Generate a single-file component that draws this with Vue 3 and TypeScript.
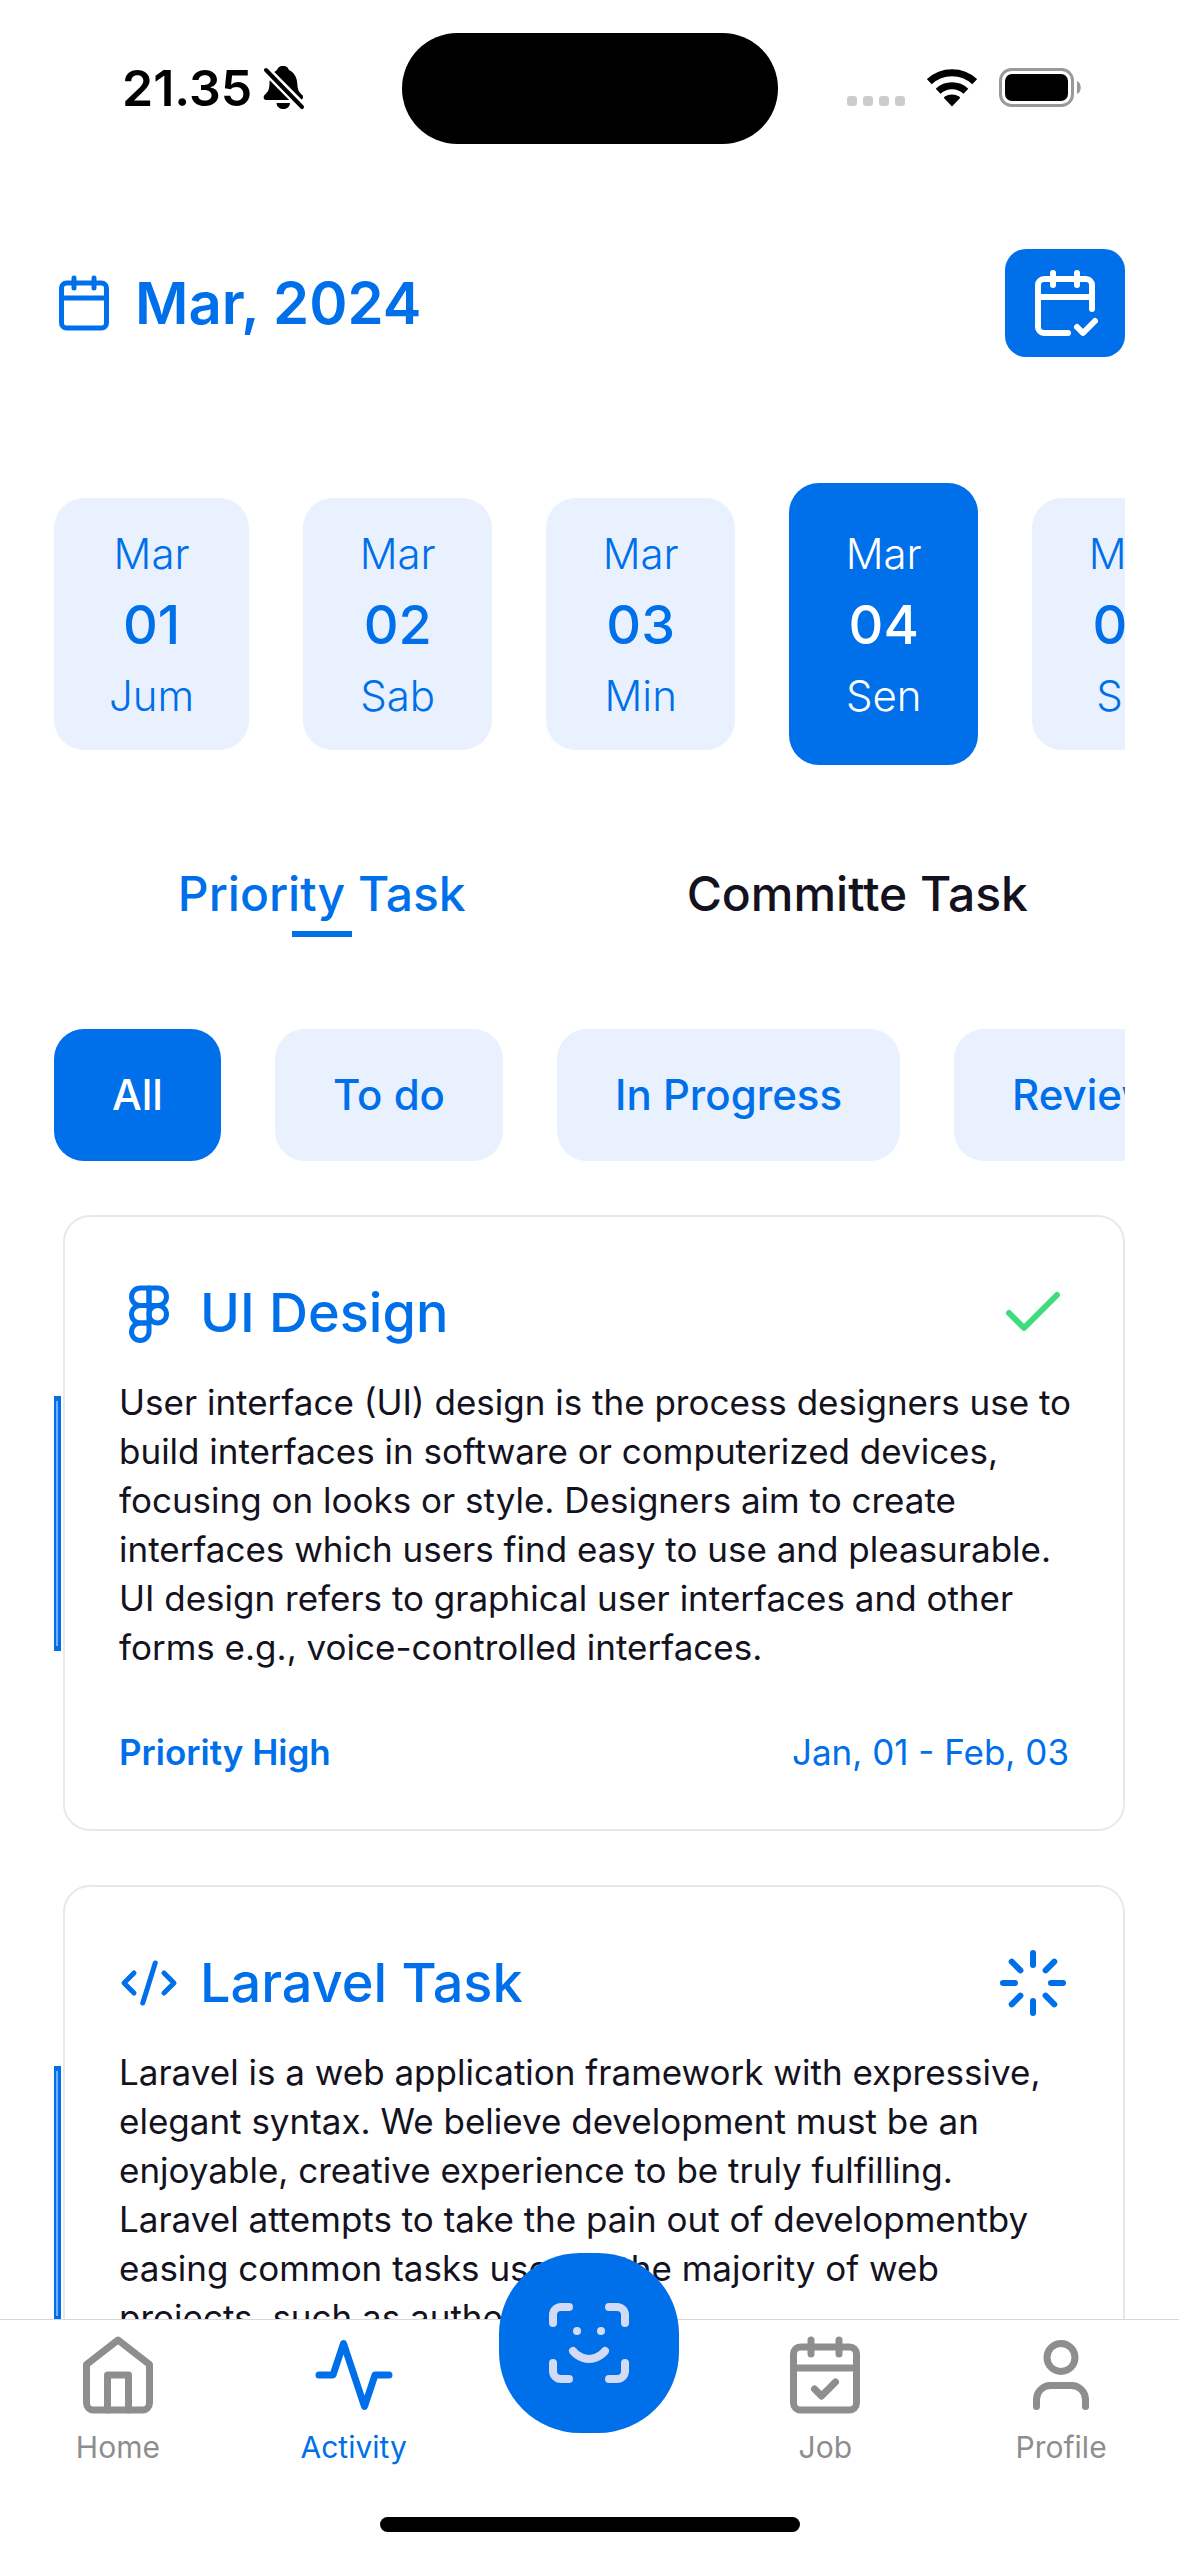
<script setup lang="ts">
import { ref } from 'vue'

const icons: Record<string, string[]> = {
  calendar: [
    'M8 2v4',
    'M16 2v4',
    'M5 4h14a2 2 0 0 1 2 2v14a2 2 0 0 1-2 2H5a2 2 0 0 1-2-2V6a2 2 0 0 1 2-2z',
    'M3 10h18',
  ],
  calendarDone: [
    'M8 2v4',
    'M16 2v4',
    'M21 14V6a2 2 0 0 0-2-2H5a2 2 0 0 0-2 2v14a2 2 0 0 0 2 2h8',
    'M3 10h18',
    'm16 20 2 2 4-4',
  ],
  figma: [
    'M5 5.5A3.5 3.5 0 0 1 8.5 2H12v7H8.5A3.5 3.5 0 0 1 5 5.5z',
    'M12 2h3.5a3.5 3.5 0 1 1 0 7H12V2z',
    'M12 12.5a3.5 3.5 0 1 1 7 0 3.5 3.5 0 1 1-7 0z',
    'M5 19.5A3.5 3.5 0 0 1 8.5 16H12v3.5a3.5 3.5 0 1 1-7 0z',
    'M5 12.5A3.5 3.5 0 0 1 8.5 9H12v7H8.5A3.5 3.5 0 0 1 5 12.5z',
  ],
  code: ['m18 16 4-4-4-4', 'm6 8-4 4 4 4', 'm14.5 4-5 16'],
  check: ['M20 6 9 17l-5-5'],
  loader: [
    'M12 2v4',
    'm16.2 7.8 2.9-2.9',
    'M18 12h4',
    'm16.2 16.2 2.9 2.9',
    'M12 18v4',
    'm4.9 19.1 2.9-2.9',
    'M2 12h4',
    'm4.9 4.9 2.9 2.9',
  ],
  home: ['m3 9 9-7 9 7v11a2 2 0 0 1-2 2H5a2 2 0 0 1-2-2z', 'M9 22V12h6v10'],
  activity: ['M22 12h-4l-3 9L9 3l-3 9H2'],
  job: [
    'M8 2v4',
    'M16 2v4',
    'M5 4h14a2 2 0 0 1 2 2v14a2 2 0 0 1-2 2H5a2 2 0 0 1-2-2V6a2 2 0 0 1 2-2z',
    'M3 10h18',
    'm9 16 2 2 4-4',
  ],
  user: ['M19 21v-2a4 4 0 0 0-4-4H9a4 4 0 0 0-4 4v2', 'M8 7a4 4 0 1 0 8 0 4 4 0 1 0-8 0z'],
  scan: [
    'M3 7V5a2 2 0 0 1 2-2h2',
    'M17 3h2a2 2 0 0 1 2 2v2',
    'M21 17v2a2 2 0 0 1-2 2h-2',
    'M7 21H5a2 2 0 0 1-2-2v-2',
    'M8 14s1.5 2 4 2 4-2 4-2',
    'M9 9h.01',
    'M15 9h.01',
  ],
}

const days = [
  { date: '01', day: 'Jum' },
  { date: '02', day: 'Sab' },
  { date: '03', day: 'Min' },
  { date: '04', day: 'Sen' },
  { date: '05', day: 'Sel' },
]
const selectedDay = ref('04')

const tabs = ['Priority Task', 'Committe Task']
const selectedTab = ref('Priority Task')

const filters = ['All', 'To do', 'In Progress', 'Review']
const selectedFilter = ref('All')

const tasks = [
  {
    title: 'UI Design',
    icon: 'figma',
    state: 'check',
    lines: [
      'User interface (UI) design is the process designers use to',
      'build interfaces in software or computerized devices,',
      'focusing on looks or style. Designers aim to create',
      'interfaces which users find easy to use and pleasurable.',
      'UI design refers to graphical user interfaces and other',
      'forms e.g., voice-controlled interfaces.',
    ],
    priority: 'Priority High',
    range: 'Jan, 01 - Feb, 03',
  },
  {
    title: 'Laravel Task',
    icon: 'code',
    state: 'loader',
    lines: [
      'Laravel is a web application framework with expressive,',
      'elegant syntax. We believe development must be an',
      'enjoyable, creative experience to be truly fulfilling.',
      'Laravel attempts to take the pain out of developmentby',
      'easing common tasks used in the majority of web',
      'projects, such as authentication.',
    ],
    priority: 'Priority High',
    range: 'Jan, 01 - Feb, 03',
  },
]

const navItems = [
  { label: 'Home', icon: 'home' },
  { label: 'Activity', icon: 'activity' },
  { label: '', icon: 'scan' },
  { label: 'Job', icon: 'job' },
  { label: 'Profile', icon: 'user' },
]
</script>

<template>
  <div class="app">
    <div class="status">
      <div class="status-side">
        <span class="clock">21.35</span>
        <svg class="bell" viewBox="0 0 40 44" aria-hidden="true">
          <path
            d="M19 0c4 0 5 2 6 4 6 3 8 8 8.3 14 .3 6 1.5 8 5 11 1.5 2 .5 5-2 5H2c-2.500 0-3-3-1.500-5 3.500-3 4.700-5 5-11C5.500 12 8 7 13 4c1-2 2-4 6-4z"
          />
          <path d="M12.500 37h13.500c-.5 8-13 8-13.500 0z" />
          <path class="slash-gap" d="M-1 1l41 41.500" />
          <path class="slash" d="M2 4l36 37" />
        </svg>
      </div>
      <div class="island"></div>
      <div class="status-side status-right">
        <span class="dots"><i v-for="n in 4" :key="n"></i></span>
        <svg class="wifi" viewBox="0 0 50 38" aria-hidden="true">
          <path class="arc" d="M2.300 12.700a33.200 33.200 0 0 1 45.400 0" />
          <path class="arc" d="M11.100 22.300a20.400 20.400 0 0 1 27.800 0" />
          <path d="M25 37.500l-7.600-8c-.6-.7-.4-1.500.4-2 4.400-2.800 10-2.800 14.400 0 .8.5 1 1.300.4 2z" />
        </svg>
        <svg class="battery" viewBox="0 0 83 40" aria-hidden="true">
          <rect class="shell" x="1.500" y="1.500" width="72" height="36" rx="11" />
          <rect x="6" y="6" width="63" height="27" rx="7" />
          <path class="tip" d="M78 13c5 2 5 11 0 13z" />
        </svg>
      </div>
    </div>

    <main class="content">
      <header class="top">
        <h1 class="month">
          <svg class="icon icon-60" viewBox="0 0 24 24" aria-hidden="true">
            <path v-for="d in icons.calendar" :key="d" :d="d" />
          </svg>
          Mar, 2024
        </h1>
        <button class="agenda" type="button" aria-label="Open agenda">
          <svg class="icon icon-72" viewBox="0 0 24 24" aria-hidden="true">
            <path v-for="d in icons.calendarDone" :key="d" :d="d" />
          </svg>
        </button>
      </header>

      <div class="days">
        <button
          v-for="d in days"
          :key="d.date"
          type="button"
          class="day"
          :class="{ active: d.date === selectedDay }"
          @click="selectedDay = d.date"
        >
          <span class="day-text">Mar</span>
          <span class="day-number">{{ d.date }}</span>
          <span class="day-text">{{ d.day }}</span>
        </button>
      </div>

      <div class="tabs" role="tablist">
        <button
          v-for="t in tabs"
          :key="t"
          type="button"
          role="tab"
          class="tab"
          :class="{ active: t === selectedTab }"
          :aria-selected="t === selectedTab"
          @click="selectedTab = t"
        >
          {{ t }}
        </button>
      </div>

      <div class="filters">
        <button
          v-for="f in filters"
          :key="f"
          type="button"
          class="filter"
          :class="{ active: f === selectedFilter }"
          @click="selectedFilter = f"
        >
          {{ f }}
        </button>
      </div>

      <div class="tasks">
        <div v-for="task in tasks" :key="task.title" class="task">
          <span class="marker"></span>
          <article class="card">
            <div class="card-head">
              <svg class="icon icon-60" viewBox="0 0 24 24" aria-hidden="true">
                <path v-for="d in icons[task.icon]" :key="d" :d="d" />
              </svg>
              <h2 class="card-title">{{ task.title }}</h2>
              <svg class="icon icon-72" :class="task.state" viewBox="0 0 24 24" aria-hidden="true">
                <path v-for="d in icons[task.state]" :key="d" :d="d" />
              </svg>
            </div>
            <p class="card-text">{{ task.lines.join('\n') }}</p>
            <div class="card-foot">
              <strong>{{ task.priority }}</strong>
              <span>{{ task.range }}</span>
            </div>
          </article>
        </div>
      </div>
    </main>

    <nav class="nav">
      <div class="nav-items">
        <template v-for="item in navItems" :key="item.icon">
          <a v-if="item.label" href="#" class="nav-item" :class="{ active: item.label === 'Activity' }">
            <svg class="icon icon-84" viewBox="0 0 24 24" aria-hidden="true">
              <path v-for="d in icons[item.icon]" :key="d" :d="d" />
            </svg>
            <span>{{ item.label }}</span>
          </a>
          <div v-else class="nav-item">
            <button type="button" class="scan" aria-label="Scan face">
              <svg class="icon icon-96" viewBox="0 0 24 24" aria-hidden="true">
                <path v-for="d in icons[item.icon]" :key="d" :d="d" />
              </svg>
            </button>
          </div>
        </template>
      </div>
      <div class="home-bar"></div>
    </nav>
  </div>
</template>

<style>
body {
  margin: 0;
  background: #fff;
}
</style>

<style scoped>
.app {
  --blue: #006fea;
  --tint: #e9f1ff;
  --ink: #14121e;
  display: flex;
  flex-direction: column;
  height: 100vh;
  overflow: hidden;
  background: #fff;
  color: var(--ink);
  font-family: Inter, "Liberation Sans", sans-serif;
}

button {
  margin: 0;
  padding: 0;
  border: 0;
  background: none;
  color: inherit;
  font: inherit;
}

.icon {
  flex: none;
  fill: none;
  stroke: currentColor;
  stroke-width: 2;
  stroke-linecap: round;
  stroke-linejoin: round;
}
.icon-60 { width: 60px; height: 60px; }
.icon-72 { width: 72px; height: 72px; }
.icon-84 { width: 84px; height: 84px; }
.icon-96 { width: 96px; height: 96px; }

.status {
  flex: none;
  display: grid;
  grid-template-columns: 1fr auto 1fr;
  align-items: center;
  height: 177px;
  color: #000;
}
.status-side {
  display: flex;
  align-items: center;
  gap: 12px;
  padding: 0 0 2px 122px;
}
.status-right {
  justify-content: flex-end;
  gap: 22px;
  padding: 0 97px 2px 0;
}
.clock {
  font-size: 50px;
  font-weight: 600;
  line-height: 60px;
}
.bell {
  width: 40px;
  height: 44px;
  overflow: visible;
}
.slash-gap { stroke: #fff; stroke-width: 9; }
.slash { stroke: #000; stroke-width: 4; stroke-linecap: round; }
.island {
  width: 376px;
  height: 111px;
  border-radius: 56px;
  background: #000;
}
.dots {
  display: flex;
  align-self: flex-end;
  gap: 6px;
  padding-bottom: 2px;
}
.dots i {
  width: 10px;
  height: 10px;
  border-radius: 3px;
  background: #ccc;
}
.wifi { width: 50px; height: 38px; }
.arc { fill: none; stroke: #000; stroke-width: 7; }
.battery { width: 83px; height: 40px; }
.shell { fill: none; stroke: #999; stroke-width: 3; }
.tip { fill: #999; }

.content {
  flex: 1;
  min-height: 0;
  overflow: hidden;
  padding: 72px 54px 0;
}

.top {
  display: flex;
  justify-content: space-between;
  align-items: center;
  color: var(--blue);
}
.month {
  display: flex;
  align-items: center;
  gap: 21px;
  margin: 0;
  font-size: 58px;
  font-weight: 600;
  line-height: 74px;
}
.agenda {
  display: flex;
  padding: 18px 24px;
  border-radius: 21px;
  background: var(--blue);
  color: #fff;
}

.days {
  display: flex;
  align-items: center;
  gap: 54px;
  margin-top: 126px;
  overflow: hidden;
}
.day {
  flex: none;
  display: flex;
  flex-direction: column;
  align-items: center;
  gap: 9px;
  min-width: 189px;
  padding: 27px 55px 25px;
  border-radius: 30px;
  background: var(--tint);
  color: var(--blue);
}
.day.active {
  padding-top: 42px;
  padding-bottom: 40px;
  background: var(--blue);
  color: #fff;
}
.day-text {
  font-size: 42px;
  font-weight: 300;
  line-height: 58px;
}
.day-number {
  font-size: 54px;
  font-weight: 500;
  line-height: 66px;
}

.tabs {
  display: flex;
  margin-top: 99px;
}
.tab {
  flex: 1;
  font-size: 48px;
  font-weight: 500;
  line-height: 60px;
}
.tab::after {
  content: "";
  display: block;
  width: 60px;
  height: 6px;
  margin: 7px auto 0;
}
.tab.active { color: var(--blue); }
.tab.active::after { background: var(--blue); }

.filters {
  display: flex;
  gap: 54px;
  margin-top: 92px;
  overflow: hidden;
}
.filter {
  flex: none;
  padding: 0 58px;
  border-radius: 30px;
  background: var(--tint);
  color: var(--blue);
  font-size: 42px;
  font-weight: 500;
  line-height: 132px;
  white-space: nowrap;
}
.filter.active {
  background: var(--blue);
  color: #fff;
}

.tasks {
  display: flex;
  flex-direction: column;
  gap: 54px;
  margin-top: 54px;
}
.task {
  display: flex;
  align-items: center;
  gap: 2px;
}
.marker {
  flex: none;
  box-sizing: border-box;
  width: 7px;
  height: 255px;
  border: solid var(--blue);
  border-width: 5px 3px 5px 2px;
  background: #6fb0fa;
}
.card {
  flex: 1;
  min-width: 0;
  padding: 54px 54px 53px;
  border: 2px solid #e8e8e8;
  border-radius: 27px;
}
.card-head {
  display: flex;
  align-items: center;
  gap: 21px;
  height: 84px;
  color: var(--blue);
}
.card-title {
  flex: 1;
  margin: 0;
  font-size: 54px;
  font-weight: 500;
  line-height: 66px;
}
.check { color: #3ddc7d; }
.card-text {
  margin: 23px 0 56px;
  font-size: 35px;
  line-height: 49px;
  white-space: pre;
}
.card-foot {
  display: flex;
  justify-content: space-between;
  margin-bottom: -1px;
  color: var(--blue);
  font-size: 35px;
  line-height: 49px;
}
.card-foot strong { font-weight: 600; }

.nav {
  position: relative;
  flex: none;
  border-top: 1px solid #d8d8d8;
  background: #fff;
}
.nav-items {
  display: flex;
  padding-top: 13px;
}
.nav-item {
  flex: 1;
  display: flex;
  flex-direction: column;
  align-items: center;
  gap: 12px;
  color: #8e8e8e;
  font-size: 30px;
  line-height: 36px;
  text-decoration: none;
}
.nav-item.active { color: var(--blue); }
.scan {
  display: flex;
  margin: -80px 0 0;
  padding: 42px;
  border-radius: 81px;
  background: var(--blue);
  color: #d3daf5;
}
.home-bar {
  width: 420px;
  height: 15px;
  margin: 52px auto 24px;
  border-radius: 8px;
  background: #000;
}
</style>
